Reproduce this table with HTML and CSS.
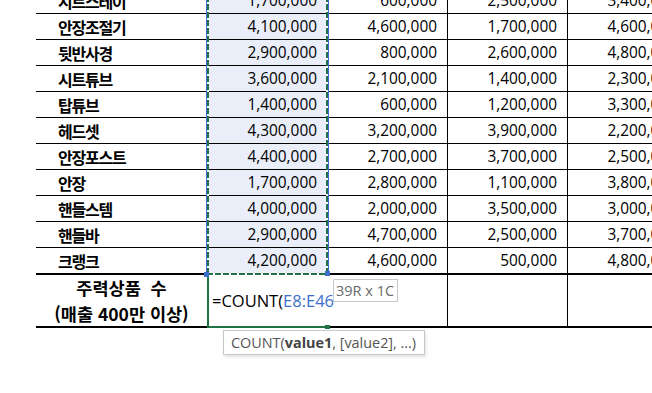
FILE: index.html
```html
<!DOCTYPE html>
<html lang="ko">
<head>
<meta charset="utf-8">
<link rel="stylesheet" href="styles.css">
</head>
<body>
<div class="sheet">
  <div class="row"><div class="c lbl">시트스테이</div><div class="c num e">1,700,000</div><div class="c num">600,000</div><div class="c num">2,500,000</div><div class="c num">3,400,000</div></div>
  <div class="row"><div class="c lbl">안장조절기</div><div class="c num e">4,100,000</div><div class="c num">4,600,000</div><div class="c num">1,700,000</div><div class="c num">4,600,000</div></div>
  <div class="row"><div class="c lbl">뒷반사경</div><div class="c num e">2,900,000</div><div class="c num">800,000</div><div class="c num">2,600,000</div><div class="c num">4,800,000</div></div>
  <div class="row"><div class="c lbl">시트튜브</div><div class="c num e">3,600,000</div><div class="c num">2,100,000</div><div class="c num">1,400,000</div><div class="c num">2,300,000</div></div>
  <div class="row"><div class="c lbl">탑튜브</div><div class="c num e">1,400,000</div><div class="c num">600,000</div><div class="c num">1,200,000</div><div class="c num">3,300,000</div></div>
  <div class="row"><div class="c lbl">헤드셋</div><div class="c num e">4,300,000</div><div class="c num">3,200,000</div><div class="c num">3,900,000</div><div class="c num">2,200,000</div></div>
  <div class="row"><div class="c lbl">안장포스트</div><div class="c num e">4,400,000</div><div class="c num">2,700,000</div><div class="c num">3,700,000</div><div class="c num">2,500,000</div></div>
  <div class="row"><div class="c lbl">안장</div><div class="c num e">1,700,000</div><div class="c num">2,800,000</div><div class="c num">1,100,000</div><div class="c num">3,800,000</div></div>
  <div class="row"><div class="c lbl">핸들스템</div><div class="c num e">4,000,000</div><div class="c num">2,000,000</div><div class="c num">3,500,000</div><div class="c num">3,000,000</div></div>
  <div class="row"><div class="c lbl">핸들바</div><div class="c num e">2,900,000</div><div class="c num">4,700,000</div><div class="c num">2,500,000</div><div class="c num">3,700,000</div></div>
  <div class="row last"><div class="c lbl">크랭크</div><div class="c num e">4,200,000</div><div class="c num">4,600,000</div><div class="c num">500,000</div><div class="c num">4,800,000</div></div>
  <div class="row total">
    <div class="c tlbl">주력상품&nbsp; 수<br>(매출 400만 이상)</div>
    <div class="c edit">=COUNT(<span class="ref">E8:E46</span><span class="caret"></span></div>
    <div class="c blank"></div>
    <div class="c blank"></div>
    <div class="c blank"></div>
  </div>

  <div class="selbox"></div>
  <div class="corner corner-l"></div>
  <div class="corner corner-r"></div>
  <div class="handle"></div>
  <div class="tip-size">39R x 1C</div>
  <div class="tip-fn">COUNT(<b>value1</b>, [value2], ...)</div>
</div>
</body>
</html>
```

FILE: styles.css
```css
html, body {
  margin: 0;
  padding: 0;
  background: #fff;
}
body {
  width: 652px;
  height: 393px;
  overflow: hidden;
}
.sheet {
  position: relative;
  margin-top: -12px;
  margin-left: 36px;
  width: 700px;
}
.row {
  display: flex;
  height: 26px;
  box-sizing: border-box;
  border-bottom: 1px solid #000;
}
.row.last {
  height: 27px;
  border-bottom: 2px solid #000;
}
.c {
  box-sizing: border-box;
  height: 100%;
  display: flex;
  align-items: center;
}
.lbl {
  width: 172px;
  padding-left: 22px;
  border-right: 1px solid #000;
  font-family: "Noto Sans CJK KR", sans-serif;
  font-weight: 700;
  font-size: 16px;
  letter-spacing: -1.2px;
  color: #000;
}
.num {
  width: 120px;
  border-right: 1px solid #000;
  justify-content: flex-end;
  padding-right: 10px;
  font-family: "Open Sans", sans-serif;
  font-size: 15.4px;
  color: #000;
}
.num.e {
  background: #e9eef8;
}
.row.total {
  height: 53px;
  border-bottom: none;
}
.total .c {
  border-bottom: 2px solid #000;
}
.tlbl {
  width: 171px;
  justify-content: center;
  text-align: center;
  font-family: "Noto Sans CJK KR", sans-serif;
  font-weight: 700;
  font-size: 17.5px;
  letter-spacing: 0;
  line-height: 26.5px;
  padding-top: 1px;
}
.total .edit {
  width: 121px;
  border-left: 2px solid #217346;
  border-bottom: 2px solid #217346;
  padding-left: 3px;
  white-space: nowrap;
  font-family: "Open Sans", sans-serif;
  font-size: 16.5px;
  color: #000;
  position: relative;
  z-index: 1;
}
.ref {
  color: #3c6fcb;
}
.caret {
  display: inline-block;
  width: 1px;
  height: 22px;
  background: #8a8a8a;
  position: relative;
  top: 3px;
}
.blank {
  width: 120px;
  border-right: 1px solid #000;
}
.selbox {
  position: absolute;
  left: 170px;
  top: 0;
  width: 123px;
  height: 287px;
  box-sizing: border-box;
  border-left: 1px solid #3c6fcb;
  border-right: 1px solid #3c6fcb;
  background:
    repeating-linear-gradient(to bottom, #217346 0 6px, #fff 6px 8px) left top / 2px 100% no-repeat,
    repeating-linear-gradient(to bottom, #217346 0 6px, #fff 6px 8px) right top / 2px 100% no-repeat,
    repeating-linear-gradient(to right, #217346 0 6px, #fff 6px 8px) left bottom / 100% 2px no-repeat;
  z-index: 2;
}
.corner {
  position: absolute;
  width: 5px;
  height: 5px;
  background: #3c6fcb;
  z-index: 3;
}
.corner-l {
  left: 168px;
  top: 284px;
}
.corner-r {
  left: 289px;
  top: 283px;
}
.handle {
  position: absolute;
  left: 289px;
  top: 337px;
  width: 5px;
  height: 4px;
  background: #217346;
  z-index: 3;
}
.tip-size {
  position: absolute;
  left: 297px;
  top: 291px;
  width: 65px;
  height: 23px;
  box-sizing: border-box;
  border: 1px solid #c8c8c8;
  background: #fff;
  padding-left: 2px;
  font-family: "Open Sans", sans-serif;
  font-size: 14.5px;
  line-height: 21px;
  color: #6a6a6a;
  white-space: nowrap;
  z-index: 4;
}
.tip-fn {
  position: absolute;
  left: 187px;
  top: 342px;
  width: 202px;
  height: 25px;
  box-sizing: border-box;
  border: 1px solid #c8c8c8;
  background: #fff;
  box-shadow: 1px 2px 3px rgba(0,0,0,0.12);
  padding-left: 7px;
  font-family: "Open Sans", sans-serif;
  font-size: 14.4px;
  line-height: 23px;
  color: #555;
  white-space: nowrap;
  z-index: 4;
}
.tip-fn b {
  color: #444;
  font-weight: 700;
}
```
